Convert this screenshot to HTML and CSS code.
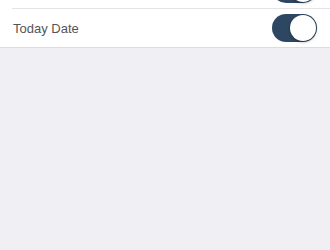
FILE: index.html
```html
<!DOCTYPE html>
<html lang="en">
<head>
    <meta charset="UTF-8">
    <meta name="viewport" content="width=device-width, initial-scale=1.0">
    <title>Settings</title>
    <link rel="stylesheet" href="styles.css">
</head>
<body>
    <div class="settings-list">
        <!-- row scrolled above the top edge -->
        <div class="setting-row">
            <span class="setting-label"></span>
            <span class="toggle on"><span class="knob"></span></span>
        </div>
        <div class="setting-row">
            <span class="setting-label">Today Date</span>
            <span class="toggle on"><span class="knob"></span></span>
        </div>
    </div>
</body>
</html>
```

FILE: styles.css
```css
body {
    margin: 0;
    background: #efeff4;
    font-family: 'Liberation Sans', Arial, sans-serif;
    min-height: 100vh;
}
.settings-list {
    background: #fff;
    margin-top: -30px;
    padding-left: 12px;
    border-bottom: 1px solid #dcdce0;
}
.setting-row {
    display: flex;
    align-items: center;
    justify-content: space-between;
    height: 38px;
    padding-right: 13px;
    border-bottom: 1px solid #e4e4e8;
}
.setting-row:last-child {
    border-bottom: none;
}
.setting-label {
    font-size: 13px;
    color: #555;
    padding-left: 1px;
}
.toggle {
    position: relative;
    width: 45px;
    height: 28px;
    border-radius: 14px;
    background: #2d4763;
    box-sizing: border-box;
}
.knob {
    position: absolute;
    right: 1px;
    top: 1px;
    width: 26px;
    height: 26px;
    border-radius: 50%;
    background: #fff;
    box-shadow: 0 1px 3px rgba(0, 0, 0, 0.35);
}
```
